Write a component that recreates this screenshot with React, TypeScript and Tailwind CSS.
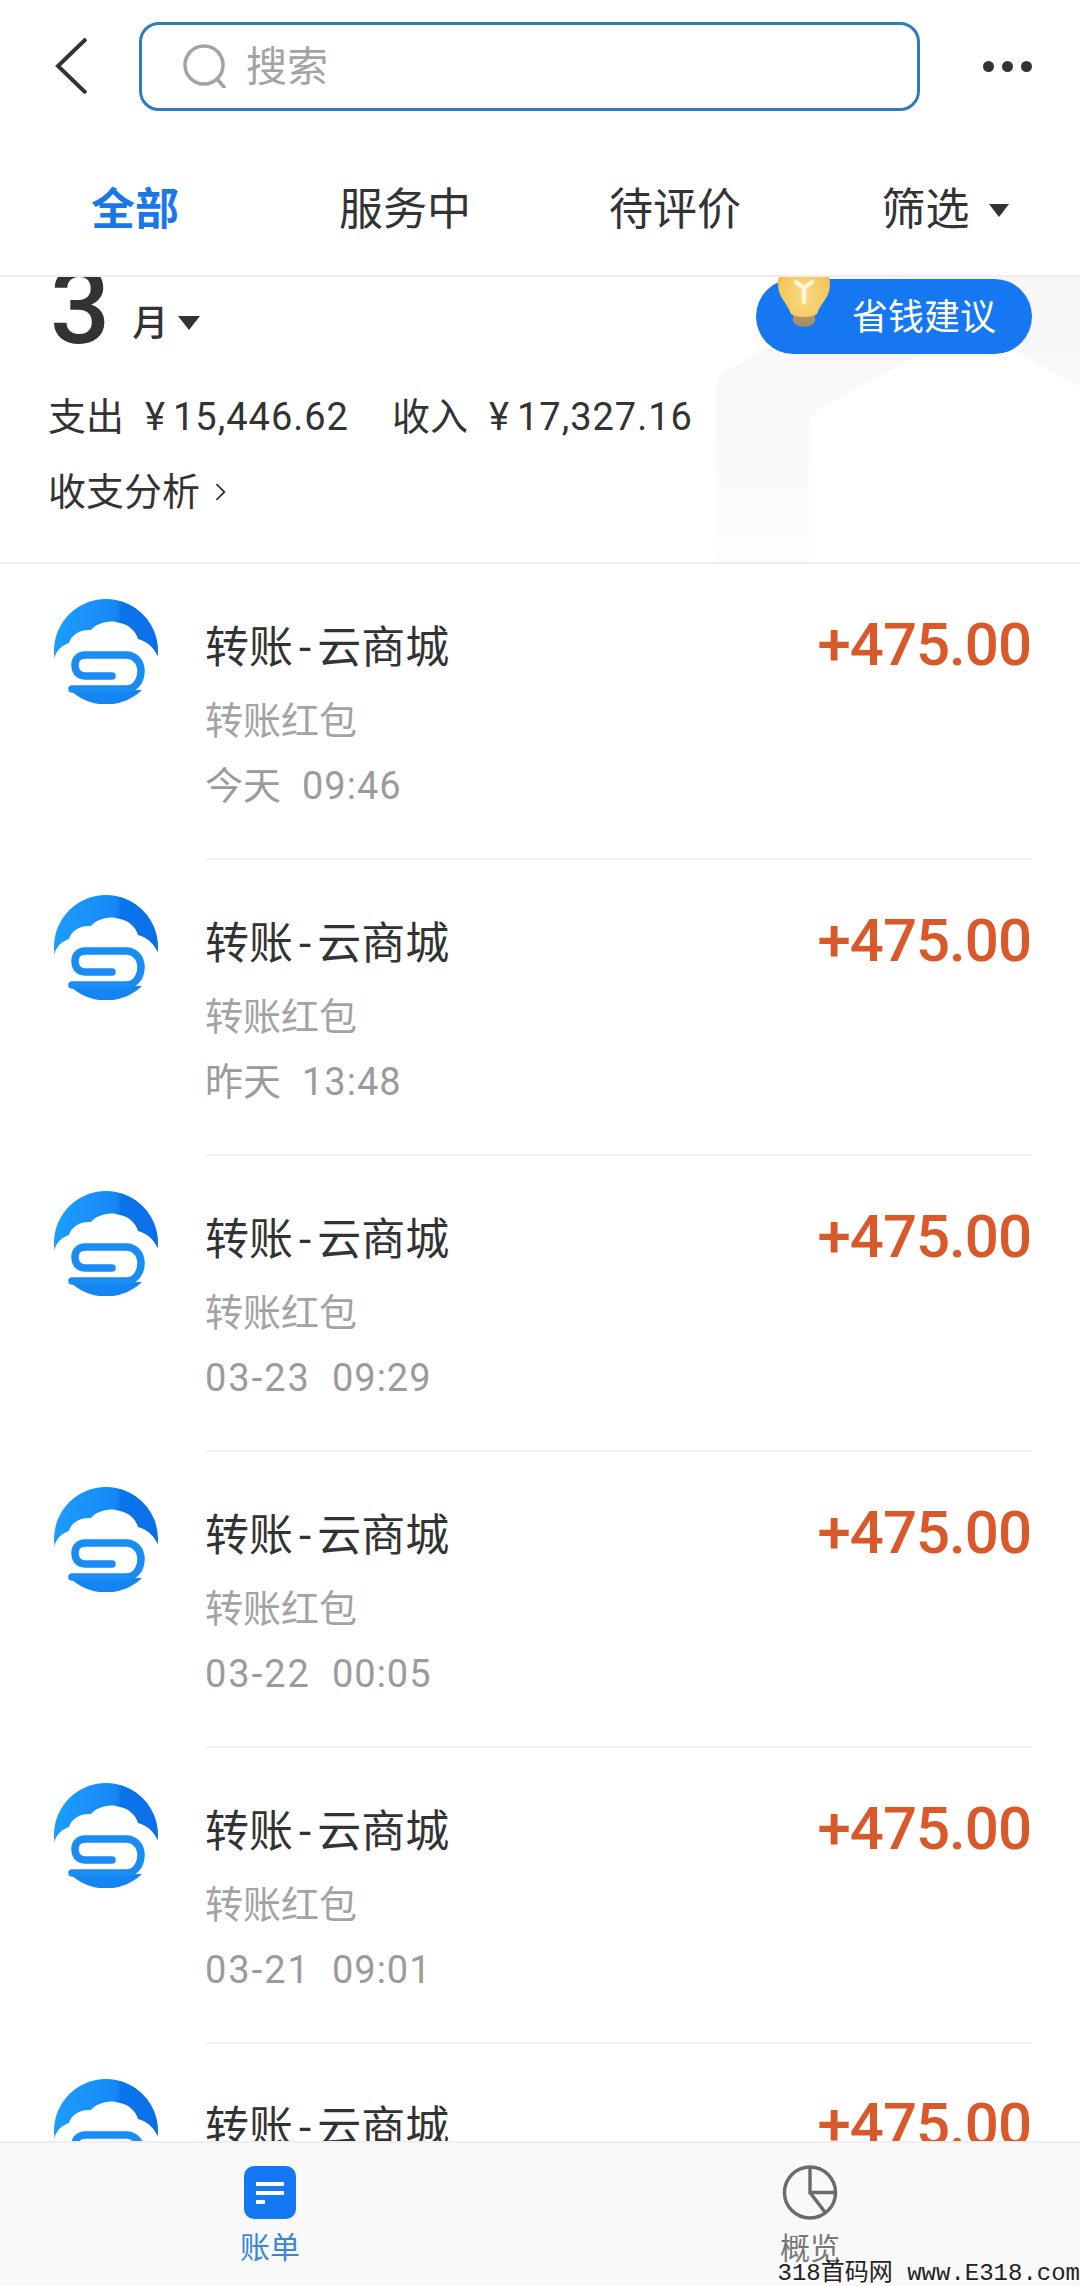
import React from 'react';

const rows = [
  { when: '今天', time: '09:46' },
  { when: '昨天', time: '13:48' },
  { when: '03-23', time: '09:29' },
  { when: '03-22', time: '00:05' },
  { when: '03-21', time: '09:01' },
  { when: '03-20', time: '09:12' },
];

function Logo() {
  return (
    <svg viewBox="0 0 104 105" className="w-[104px] h-[105px] shrink-0">
      <defs>
        <linearGradient id="logoBlue" x1="0" y1="0.4" x2="1" y2="0.5">
          <stop offset="0" stopColor="#1b9dff" />
          <stop offset="0.55" stopColor="#1789f7" />
          <stop offset="0.62" stopColor="#0b74ea" />
          <stop offset="1" stopColor="#0a6fe6" />
        </linearGradient>
      </defs>
      <circle cx="52" cy="52" r="52" fill="url(#logoBlue)" />
      <path
        d="M0 60 C3 50 9 46 15 44 C17 36 26 30 37 31 C42 24 56 20 66 24 C76 26 82 33 84 40 C92 42 100 48 104 58 L104 92 L0 92 Z"
        fill="#fff"
      />
      <path d="M16 91 H88 A52 52 0 0 1 16 91 Z" fill="#1583f2" />
      <path
        d="M58 77 H31 C24 77 21 72 21 66 C21 60 25 56 31 56 H72 C81 56 87 63 87 72 C87 82 81 90 72 90 H18"
        fill="none"
        stroke="#1a8cf5"
        strokeWidth="7.5"
        strokeLinecap="round"
      />
    </svg>
  );
}

function Bulb() {
  return (
    <svg viewBox="0 0 52 70" className="absolute left-[22px] top-[-21px] w-[52px] h-[70px]">
      <defs>
        <radialGradient id="bulbGlow" cx="0.5" cy="0.65" r="0.7">
          <stop offset="0" stopColor="#f9dc86" />
          <stop offset="0.7" stopColor="#f3c65a" />
          <stop offset="1" stopColor="#dfa83a" />
        </radialGradient>
        <linearGradient id="bulbBase" x1="0" y1="0" x2="0" y2="1">
          <stop offset="0" stopColor="#d9a640" />
          <stop offset="1" stopColor="#9c8a70" />
        </linearGradient>
      </defs>
      <path d="M15 44 H37 V62 C37 71 15 71 15 62 Z" fill="url(#bulbBase)" />
      <path
        d="M0 26 C0 10 12 0 26 0 C40 0 52 10 52 26 C52 40 43 44 39 56 C32 60 20 60 13 56 C9 44 0 40 0 26 Z"
        fill="url(#bulbGlow)"
      />
      <path d="M18 24 L26 30 L34 24 M26 30 V44" fill="none" stroke="#fff6d8" strokeWidth="4.5" strokeLinecap="round" />
      <circle cx="45" cy="1" r="3" fill="#b5392f" />
    </svg>
  );
}

function Row({ when, time }: { when: string; time: string }) {
  return (
    <div className="flex h-[296px] shrink-0 pl-[54px] pr-[48px]">
      <div className="mt-[35px]">
        <Logo />
      </div>
      <div className="ml-[47px] flex flex-1 justify-between border-b-2 border-[#f1f1f1] pt-[54px]">
        <div>
          <div className="text-[44px] leading-[60px] text-[#333333]">
            转账<span className="mx-[6px]">-</span>云商城
          </div>
          <div className="mt-[13px] text-[38px] leading-[60px] text-[#a3a3a3]">转账红包</div>
          <div className="mt-[5px] flex gap-[21px] text-[38px] leading-[60px] text-[#9b9b9b]">
            <span className={when.includes('-') ? 'tracking-[2px]' : ''}>{when}</span>
            <span className="tracking-[1px]">{time}</span>
          </div>
        </div>
        <div className="mr-[1px] -mt-[13px] text-[60px] leading-[80px] font-medium tracking-[-1px] text-[#d9592a]">+475.00</div>
      </div>
    </div>
  );
}

export default function App() {
  return (
    <div className="relative flex h-[2286px] w-[1080px] flex-col overflow-hidden bg-white font-['Roboto','Noto_Sans_CJK_SC',sans-serif] text-[#333333]">
      {/* top bar */}
      <header className="relative z-10 h-[277px] shrink-0 border-b-2 border-[#eeeeee] bg-white">
        <div className="flex h-[132px] items-center pl-[55px]">
          <svg viewBox="0 0 32 56" className="h-[56px] w-[32px]" fill="none" stroke="#333333" strokeWidth="4">
            <path d="M31 1 L3 28 L31 55" />
          </svg>
          <div className="ml-[52px] flex h-[89px] w-[781px] items-center rounded-[20px] border-[3px] border-[#2f7cbd] pl-[41px]">
            <svg viewBox="0 0 44 44" className="h-[44px] w-[44px]" fill="none" stroke="#a3a3a3" strokeWidth="3.5">
              <circle cx="21" cy="21" r="19" />
              <path d="M34 35 L41 43" strokeLinecap="round" />
            </svg>
            <span className="ml-[19px] pt-[4px] text-[41px] text-[#a3a3a3]">搜索</span>
          </div>
          <div className="ml-[63px] flex gap-[8px]">
            <span className="h-[11px] w-[11px] rounded-full bg-[#333333]" />
            <span className="h-[11px] w-[11px] rounded-full bg-[#333333]" />
            <span className="h-[11px] w-[11px] rounded-full bg-[#333333]" />
          </div>
        </div>
        <div className="grid grid-cols-4 pt-[48px] text-[44px] leading-[60px]">
          <div className="text-center font-bold text-[#1a78e6]">全部</div>
          <div className="text-center">服务中</div>
          <div className="text-center">待评价</div>
          <div className="flex items-center justify-center gap-[19px]">
            <span>筛选</span>
            <span className="h-0 w-0 border-x-[10px] border-t-[13px] border-x-transparent border-t-[#333333]" />
          </div>
        </div>
      </header>

      {/* scrolled content, clipped by the bars */}
      <main className="min-h-0 flex-1 overflow-hidden">
        <section className="relative -mt-[20px] h-[307px] border-b-2 border-[#eeeeee] pl-[48px] pr-[48px]">
          <svg viewBox="0 0 364 305" className="absolute bottom-0 right-0 h-[305px] w-[364px]">
            <defs>
              <linearGradient id="hexFade" x1="0" y1="0" x2="0" y2="1">
                <stop offset="0" stopColor="#f6f6f6" />
                <stop offset="0.6" stopColor="#f9f9f9" />
                <stop offset="1" stopColor="#fdfdfd" />
              </linearGradient>
            </defs>
            <path
              d="M0 305 V130 C0 122 4 118 10 114 L180 21 L230 0 H364 V130 L303 96 L250 70 L200 100 L105 150 C97 156 93 162 93 170 V305 Z"
              fill="url(#hexFade)"
            />
          </svg>
          <div className="relative flex items-start justify-between">
            <div className="flex items-end">
              <span className="ml-[2px] -mt-[1px] text-[106px] leading-[102px] font-medium">3</span>
              <span className="ml-[22px] mb-[9px] text-[36px] leading-[50px] font-medium">月</span>
              <span className="mb-[28px] ml-[10px] h-0 w-0 border-x-[11px] border-t-[14px] border-x-transparent border-t-[#333333]" />
            </div>
            <div className="relative mt-[22px] flex h-[75px] w-[276px] items-center justify-end rounded-full bg-[#1677f2] pt-[3px] pr-[36px] text-[36px] text-white">
              <Bulb />
              省钱建议
            </div>
          </div>
          <div className="relative mt-[31px] flex text-[38px] leading-[56px]">
            <span>支出</span>
            <span className="ml-[21px]">¥</span>
            <span className="ml-[8px] tracking-[1px]">15,446.62</span>
            <span className="ml-[43px]">收入</span>
            <span className="ml-[21px]">¥</span>
            <span className="ml-[8px] tracking-[1px]">17,327.16</span>
          </div>
          <div className="relative mt-[19px] flex items-center text-[38px] leading-[56px]">
            <span>收支分析</span>
            <svg viewBox="0 0 10 16" className="ml-[15px] h-[18px] w-[12px]" fill="none" stroke="#333333" strokeWidth="1.6">
              <path d="M1 1 L8 8 L1 15" />
            </svg>
          </div>
        </section>
        <div className="flex flex-col">
          {rows.map((r) => (
            <Row key={r.when} when={r.when} time={r.time} />
          ))}
        </div>
      </main>

      {/* bottom tabs */}
      <footer className="relative z-10 grid h-[145px] shrink-0 grid-cols-2 border-t-2 border-[#eeeeee] bg-[#f9f9f9]">
        <div className="flex flex-col items-center pt-[23px]">
          <div className="flex h-[53px] w-[52px] flex-col justify-center gap-[5px] rounded-[10px] bg-[#1677f2] pl-[12px]">
            <span className="h-[4px] w-[28px] bg-white" />
            <span className="h-[4px] w-[28px] bg-white" />
            <span className="h-[4px] w-[9px] bg-white" />
          </div>
          <span className="mt-[9px] text-[30px] leading-[40px] text-[#3a86d8]">账单</span>
        </div>
        <div className="flex flex-col items-center pt-[22px]">
          <svg viewBox="0 0 56 56" className="h-[55px] w-[56px]" fill="none" stroke="#6b6b6b" strokeWidth="3.5">
            <circle cx="28" cy="28" r="26" />
            <path d="M28 2 V28 H54 M28 28 L44 49" />
          </svg>
          <span className="mt-[9px] text-[30px] leading-[40px] text-[#777777]">概览</span>
        </div>
      </footer>

      <div className="absolute bottom-0 right-0 z-20 font-['Liberation_Mono','Noto_Sans_CJK_SC',monospace] text-[24px] leading-[24px] whitespace-nowrap text-[#222222]">
        318首码网 www.E318.com
      </div>
    </div>
  );
}
